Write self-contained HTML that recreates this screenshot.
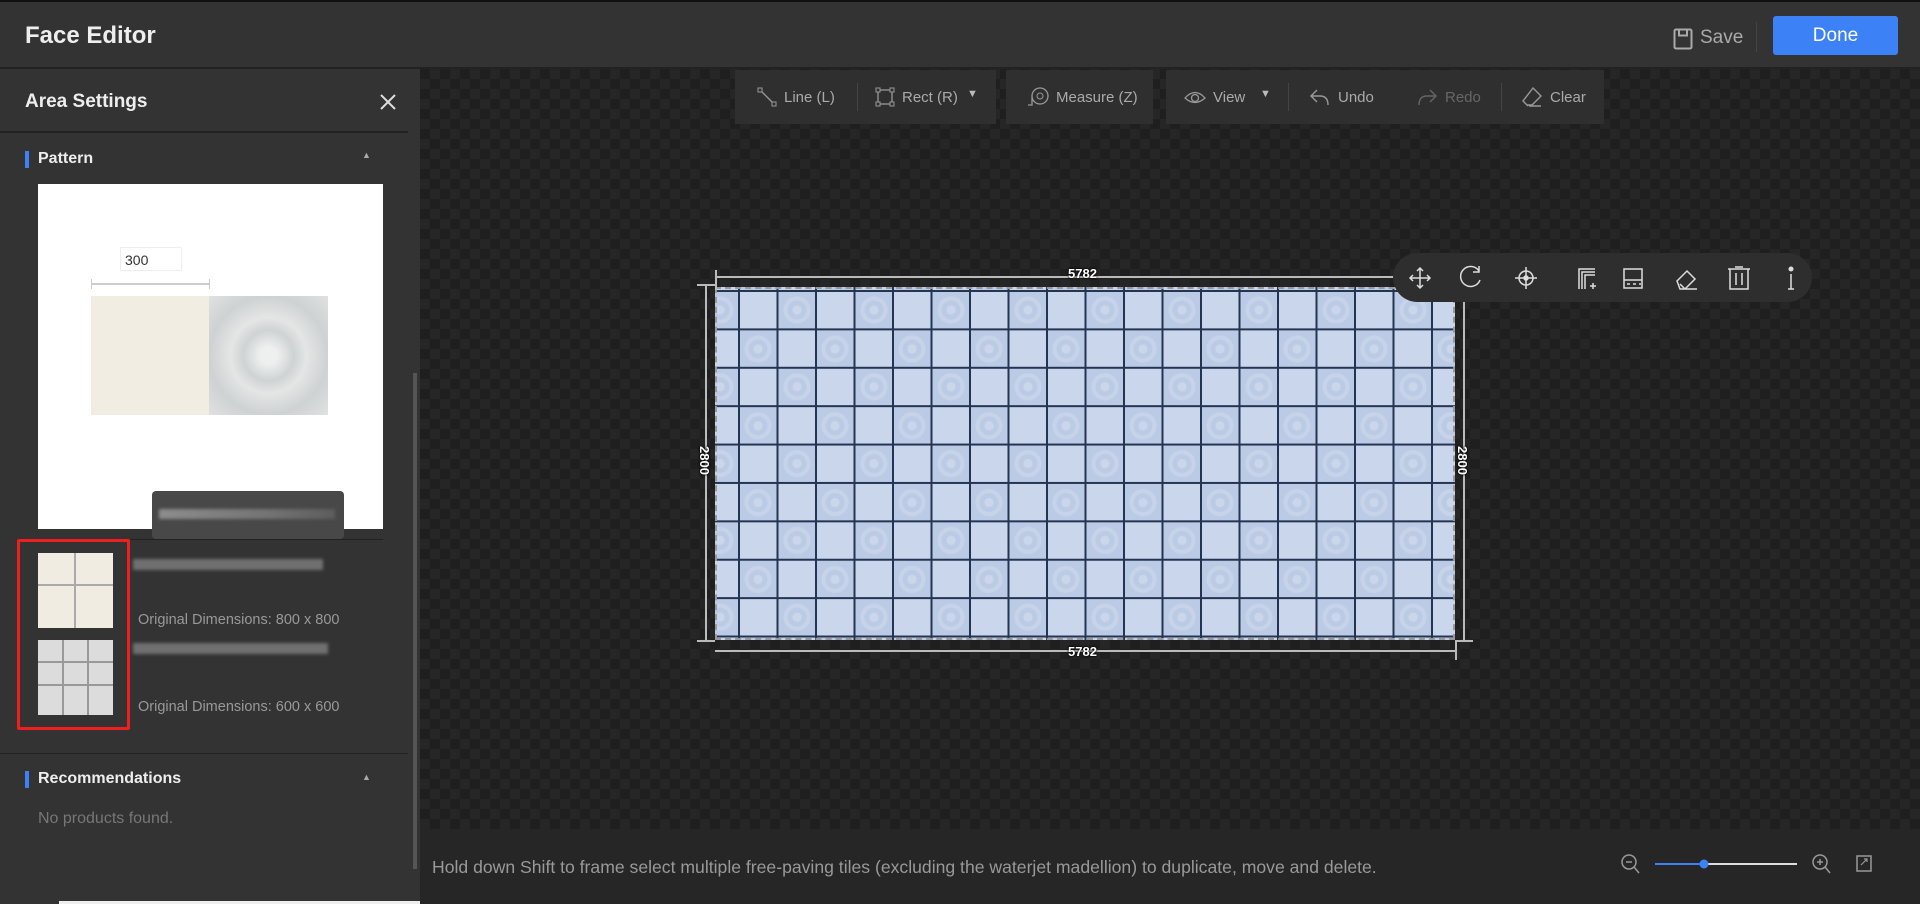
<!DOCTYPE html>
<html><head><meta charset="utf-8"><style>
*{box-sizing:border-box;margin:0;padding:0}
body{width:1920px;height:904px;overflow:hidden;background:#333;font-family:"Liberation Sans",sans-serif;position:relative;color:#ddd}
.abs{position:absolute}
#hdr{left:0;top:0;width:1920px;height:69px;background:#333;border-top:2px solid #111;border-bottom:2px solid #222}
#canvas{left:420px;top:69px;width:1500px;height:760px;background-color:#1f1f1f;background-image:conic-gradient(#262626 25%,#1f1f1f 0 50%,#262626 0 75%,#1f1f1f 0);background-size:20px 20px}
#bottom{left:420px;top:829px;width:1500px;height:75px;background:#262626}
.tb{background:#2f2f2f;height:54px;top:70px;display:flex;align-items:center;font-size:15px;color:#aaa}
.tb .it{display:flex;align-items:center;gap:7px;position:absolute}
.div{position:absolute;width:1px;height:28px;background:#444;top:13px}
svg{display:block}
#tiles{left:715px;top:287px;width:740px;height:353px;
background-image:linear-gradient(90deg,#243453 0 2px,transparent 2px),linear-gradient(#243453 0 2px,transparent 2px),
radial-gradient(circle at 58px 19px,rgba(255,255,255,.22) 0 4px,transparent 5px 9px,rgba(255,255,255,.16) 10px 13px,transparent 14px),
radial-gradient(circle at 19px 58px,rgba(255,255,255,.22) 0 4px,transparent 5px 9px,rgba(255,255,255,.16) 10px 13px,transparent 14px),
conic-gradient(#bccbe5 25%,#cad6eb 0 50%,#bccbe5 0 75%,#cad6eb 0);
background-size:38.5px 100%,100% 38.4px,77px 76.8px,77px 76.8px,77px 76.8px;
background-position:23px 0,0 3px,24px 4px,24px 4px,24px 4px}
.dim{background:#bbb}
.lbl{color:#fff;font-size:13px;font-weight:bold;text-shadow:0 0 2px #000,0 0 2px #000}
.ft{left:1393px;top:253px;width:419px;height:49px;background:#2e2e2e;border-radius:25px}
.small{font-size:14.5px;color:#999}
</style></head><body>
<div id="hdr" class="abs">
<div class="abs" style="left:25px;top:20px;font-size:24px;font-weight:bold;color:#eee">Face Editor</div>
<svg class="abs" style="left:1673px;top:26px" width="20" height="22" viewBox="0 0 20 22"><rect x="1.5" y="1.5" width="17" height="19" rx="1.5" fill="none" stroke="#aaa" stroke-width="2"/><rect x="6" y="1.5" width="8" height="6" fill="none" stroke="#aaa" stroke-width="2"/></svg>
<div class="abs" style="left:1700px;top:25px;font-size:19px;color:#aaa">Save</div>
<div class="abs" style="left:1756px;top:20px;width:1px;height:30px;background:#444"></div>
<div class="abs" style="left:1773px;top:14px;width:125px;height:39px;background:#3c82f6;border-radius:3px;color:#fff;font-size:19px;text-align:center;line-height:39px">Done</div>
</div>

<div class="abs" style="left:0;top:69px;width:420px;height:835px;background:#333"></div>
<div class="abs" style="left:25px;top:91px;font-size:19px;font-weight:bold;color:#eee">Area Settings</div>
<svg class="abs" style="left:380px;top:94px" width="16" height="16"><path d="M1 1L15 15M15 1L1 15" stroke="#ddd" stroke-width="2"/></svg>
<div class="abs" style="left:0;top:131px;width:408px;height:2px;background:#222"></div>
<div class="abs" style="left:25px;top:151px;width:4px;height:17px;background:#3c82f6"></div>
<div class="abs" style="left:38px;top:150px;font-size:16px;font-weight:bold;color:#eee">Pattern</div>
<div class="abs" style="left:362px;top:150px;font-size:9px;color:#aaa">▲</div>
<div class="abs" style="left:38px;top:184px;width:345px;height:345px;background:#fff"></div>
<div class="abs" style="left:120px;top:247px;width:62px;height:24px;border:1px solid #eee;font-size:14px;color:#333;padding:4px 4px">300</div>
<div class="abs" style="left:91px;top:283px;width:119px;height:2px;background:#ccc"></div>
<div class="abs" style="left:91px;top:279px;width:1px;height:10px;background:#ccc"></div>
<div class="abs" style="left:209px;top:279px;width:1px;height:10px;background:#ccc"></div>
<div class="abs" style="left:91px;top:296px;width:119px;height:119px;background:#f1ede3"></div>
<div class="abs" style="left:209px;top:296px;width:119px;height:119px;background:radial-gradient(circle,#eef0f0 10%,#d0d3d3 30%,#e4e6e6 45%,#cfd2d2 70%,#e0e2e2 100%)"></div>
<div class="abs" style="left:152px;top:491px;width:192px;height:48px;background:#484848;border-radius:4px"></div>
<div class="abs" style="left:159px;top:509px;width:176px;height:10px;background:linear-gradient(90deg,#aaa,#888 60%,#666);opacity:.7;filter:blur(1.5px)"></div>
<div class="abs" style="left:130px;top:539px;width:253px;height:1px;background:#222"></div>
<div class="abs" style="left:17px;top:539px;width:113px;height:191px;border:3px solid #f01f1f;border-radius:2px"></div>
<div class="abs" style="left:38px;top:553px;width:75px;height:75px;background:#f0ece1;background-image:linear-gradient(90deg,transparent 36px,#aaa 36px 38px,transparent 38px),linear-gradient(transparent 31px,#aaa 31px 33px,transparent 33px)"></div>
<div class="abs" style="left:38px;top:640px;width:75px;height:75px;background:#dcdcdc;background-image:linear-gradient(90deg,transparent 24px,#999 24px 26px,transparent 26px 49px,#999 49px 51px,transparent 51px),linear-gradient(transparent 21px,#999 21px 23px,transparent 23px 44px,#999 44px 46px,transparent 46px)"></div>
<div class="abs" style="left:133px;top:559px;width:190px;height:11px;background:#999;opacity:.6;filter:blur(1.5px)"></div>
<div class="abs" style="left:133px;top:643px;width:195px;height:11px;background:#999;opacity:.6;filter:blur(1.5px)"></div>
<div class="abs small" style="left:138px;top:612px">Original Dimensions: 800 x 800</div>
<div class="abs small" style="left:138px;top:699px">Original Dimensions: 600 x 600</div>
<div class="abs" style="left:0;top:753px;width:408px;height:1px;background:#222"></div>
<div class="abs" style="left:25px;top:771px;width:4px;height:17px;background:#3c82f6"></div>
<div class="abs" style="left:38px;top:770px;font-size:16px;font-weight:bold;color:#eee">Recommendations</div>
<div class="abs" style="left:362px;top:772px;font-size:9px;color:#aaa">▲</div>
<div class="abs" style="left:38px;top:810px;font-size:16px;color:#777">No products found.</div>
<div class="abs" style="left:413px;top:373px;width:4px;height:496px;background:#555"></div>
<div class="abs" style="left:59px;top:901px;width:431px;height:3px;background:#eee"></div>

<div id="canvas" class="abs"></div>
<div id="bottom" class="abs"></div>
<div class="abs" style="left:432px;top:857px;font-size:17.6px;color:#999">Hold down Shift to frame select multiple free-paving tiles (excluding the waterjet madellion) to duplicate, move and delete.</div>
<svg class="abs" style="left:1620px;top:852px" width="278" height="24" viewBox="0 0 278 24">
<circle cx="9" cy="10" r="7" fill="none" stroke="#999" stroke-width="1.5"/><path d="M6 10h6M14 15l5 6" stroke="#999" stroke-width="1.5"/>
<rect x="35" y="11" width="142" height="2" fill="#ddd"/><rect x="35" y="11" width="49" height="2" fill="#3c82f6"/><circle cx="84" cy="12" r="4.5" fill="#3c82f6"/>
<circle cx="200" cy="10" r="7" fill="none" stroke="#999" stroke-width="1.5"/><path d="M197 10h6M200 7v6M205 15l5 6" stroke="#999" stroke-width="1.5"/>
<rect x="237" y="4" width="14" height="15" fill="none" stroke="#999" stroke-width="1.5"/><path d="M241 13l6-6M244 7h3v3" stroke="#999" stroke-width="1.2"/>
</svg>

<div class="abs tb" style="left:735px;width:261px">
 <div class="it" style="left:22px"><svg width="20" height="20"><rect x="1" y="1" width="4" height="4" fill="none" stroke="#999"/><rect x="15" y="15" width="4" height="4" fill="none" stroke="#999"/><path d="M5 5L15 15" stroke="#999" stroke-width="1.3"/></svg>Line (L)</div>
 <div class="div" style="left:122px"></div>
 <div class="it" style="left:140px"><svg width="20" height="20"><rect x="3" y="3" width="14" height="14" fill="none" stroke="#999" stroke-width="1.3"/><rect x="1" y="1" width="4" height="4" fill="#2f2f2f" stroke="#999"/><rect x="15" y="1" width="4" height="4" fill="#2f2f2f" stroke="#999"/><rect x="1" y="15" width="4" height="4" fill="#2f2f2f" stroke="#999"/><rect x="15" y="15" width="4" height="4" fill="#2f2f2f" stroke="#999"/></svg>Rect (R)</div>
 <div class="it" style="left:232px;font-size:11px;color:#bbb;top:18px">▼</div>
</div>
<div class="abs tb" style="left:1006px;width:147px">
 <div class="it" style="left:21px"><svg width="22" height="22"><circle cx="13" cy="10" r="8" fill="none" stroke="#999" stroke-width="1.3"/><circle cx="13" cy="10" r="3" fill="none" stroke="#999"/><path d="M5 11v8H1" fill="none" stroke="#999" stroke-width="1.3"/></svg>Measure (Z)</div>
</div>
<div class="abs tb" style="left:1166px;width:438px">
 <div class="it" style="left:18px"><svg width="22" height="20"><path d="M1 11Q11 0 21 11Q11 20 1 11Z" fill="none" stroke="#999" stroke-width="1.3"/><circle cx="11" cy="11" r="3.5" fill="none" stroke="#999" stroke-width="1.3"/></svg>View</div>
 <div class="it" style="left:94px;font-size:11px;color:#bbb;top:18px">▼</div>
 <div class="div" style="left:122px"></div>
 <div class="it" style="left:143px"><svg width="22" height="20"><path d="M8 3L2 9l6 6M2 9h9q8 0 8 9" fill="none" stroke="#999" stroke-width="1.4"/></svg>Undo</div>
 <div class="it" style="left:250px;color:#666"><svg width="22" height="20"><path d="M14 3l6 6-6 6M20 9h-9q-8 0-8 9" fill="none" stroke="#666" stroke-width="1.4"/></svg>Redo</div>
 <div class="div" style="left:335px"></div>
 <div class="it" style="left:355px"><svg width="22" height="22"><path d="M12 2l8 8-9 9H6l-4-4z M2 15l5 5 M8 20h12" fill="none" stroke="#999" stroke-width="1.4"/></svg>Clear</div>
</div>

<div id="tiles" class="abs"></div>
<div class="abs" style="left:715px;top:287px;width:740px;height:353px;border:2px dashed #999"></div>
<div class="abs dim" style="left:715px;top:276px;width:748px;height:2px"></div>
<div class="abs dim" style="left:715px;top:270px;width:2px;height:20px"></div>
<div class="abs dim" style="left:715px;top:650px;width:740px;height:2px"></div>
<div class="abs dim" style="left:1455px;top:640px;width:2px;height:20px"></div>
<div class="abs dim" style="left:705px;top:284px;width:2px;height:358px"></div>
<div class="abs dim" style="left:697px;top:284px;width:18px;height:2px"></div>
<div class="abs dim" style="left:697px;top:640px;width:18px;height:2px"></div>
<div class="abs dim" style="left:1463px;top:276px;width:2px;height:366px"></div>
<div class="abs dim" style="left:1455px;top:640px;width:18px;height:2px"></div>
<div class="abs lbl" style="left:1068px;top:266px">5782</div>
<div class="abs lbl" style="left:1068px;top:644px">5782</div>
<div class="abs lbl" style="left:690px;top:453px;transform:rotate(90deg)">2800</div>
<div class="abs lbl" style="left:1448px;top:453px;transform:rotate(90deg)">2800</div>

<div class="abs ft"></div>
<svg class="abs" style="left:1393px;top:253px" width="419" height="49" viewBox="0 0 419 49" fill="none" stroke="#ddd" stroke-width="1.5">
<path d="M27 15v20M17 25h20M24 18l3-3 3 3M24 32l3 3 3-3M20 22l-3 3 3 3M34 22l3 3-3 3"/>
<path d="M86 18a10 10 0 1 0 1 9M86 13v6h-6" />
<circle cx="133" cy="25" r="7"/><circle cx="133" cy="25" r="2" fill="#ddd"/><path d="M133 14v22M122 25h22"/>
<path d="M186 36V16h16M189 36V19h13M192 36V22h10M197 33h6M200 30v6"/>
<rect x="231" y="16" width="18" height="19"/><path d="M231 27h18M234 31h3M240 31h3M246 31h2"/>
<path d="M284 28l10-10 8 8-10 10h-5z M287 31l5 5 M292 36h12"/>
<path d="M335 16h22M342 14h8M337 16v20h18V16M343 20v12M349 20v12"/>
<circle cx="398" cy="16" r="1.8" fill="#ddd"/><path d="M398 21v15M395 36h6"/>
</svg>
</body></html>
